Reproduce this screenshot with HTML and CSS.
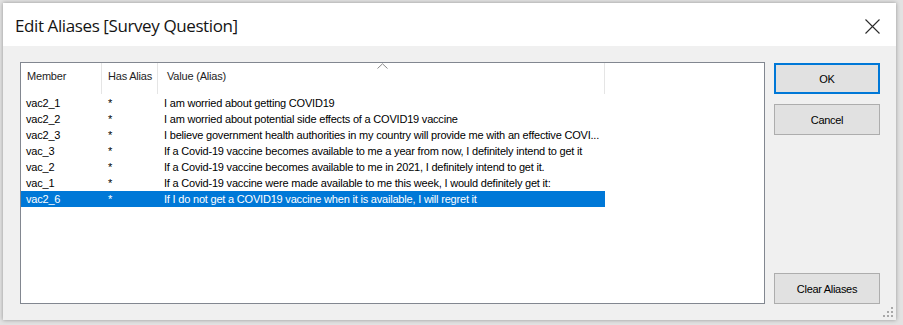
FILE: index.html
```html
<!DOCTYPE html>
<html lang="en">
  <head>
    <meta charset="UTF-8" />
    <title>Edit Aliases</title>
    <link rel="stylesheet" href="styles.css">
  </head>
  <body>
    <div class="dialog">
      <div class="title-bar">
        <p class="title">Edit Aliases [Survey Question]</p>
        <svg class="close-icon" width="15" height="15" viewBox="0 0 15 15">
          <path d="M0.5 0.5 L14.5 14.5 M14.5 0.5 L0.5 14.5" stroke="#2b2b2b" stroke-width="1.1" fill="none"/>
        </svg>
      </div>
      <div class="dialog-body">
        <div class="alias-list">
          <div class="list-header">
            <div class="head-cell col-member">Member</div>
            <div class="head-cell col-has">Has Alias</div>
            <div class="head-cell col-value">Value (Alias)</div>
            <div class="head-cell col-rest"></div>
            <svg class="sort-arrow" width="11" height="6" viewBox="0 0 11 6">
              <path d="M0.5 5.5 L5.5 0.8 L10.5 5.5" stroke="#8a8a8a" stroke-width="1" fill="none"/>
            </svg>
          </div>
          <div class="list-rows">
            <div class="row"><span class="col-member">vac2_1</span><span class="col-has">*</span><span class="col-value">I am worried about getting COVID19</span></div>
            <div class="row"><span class="col-member">vac2_2</span><span class="col-has">*</span><span class="col-value">I am worried about potential side effects of a COVID19 vaccine</span></div>
            <div class="row"><span class="col-member">vac2_3</span><span class="col-has">*</span><span class="col-value">I believe government health authorities in my country will provide me with an effective COVI...</span></div>
            <div class="row"><span class="col-member">vac_3</span><span class="col-has">*</span><span class="col-value">If a Covid-19 vaccine becomes available to me a year from now, I definitely intend to get it</span></div>
            <div class="row"><span class="col-member">vac_2</span><span class="col-has">*</span><span class="col-value">If a Covid-19 vaccine becomes available to me in 2021, I definitely intend to get it.</span></div>
            <div class="row"><span class="col-member">vac_1</span><span class="col-has">*</span><span class="col-value">If a Covid-19 vaccine were made available to me this week, I would definitely get it:</span></div>
            <div class="row selected"><span class="col-member">vac2_6</span><span class="col-has">*</span><span class="col-value">If I do not get a COVID19 vaccine when it is available, I will regret it</span></div>
          </div>
        </div>
        <div class="button-column">
          <button class="dlg-button default-button">OK</button>
          <button class="dlg-button">Cancel</button>
          <button class="dlg-button clear-button">Clear Aliases</button>
        </div>
      </div>
      <div class="grip">
        <svg width="10" height="10" viewBox="0 0 10 10">
          <rect x="8" y="0" width="2" height="2" fill="#a8a8a8"/>
          <rect x="4" y="4" width="2" height="2" fill="#a8a8a8"/>
          <rect x="8" y="4" width="2" height="2" fill="#a8a8a8"/>
          <rect x="0" y="8" width="2" height="2" fill="#a8a8a8"/>
          <rect x="4" y="8" width="2" height="2" fill="#a8a8a8"/>
          <rect x="8" y="8" width="2" height="2" fill="#a8a8a8"/>
        </svg>
      </div>
    </div>
  </body>
</html>
```

FILE: styles.css
```css
body{
  margin: 0;
  padding: 3px 7px 5px 3px;
  background-color: rgb(226, 226, 226);
  font-family: "Liberation Sans", Arial, sans-serif;
  font-size: 11px;
  letter-spacing: -0.2px;
  color: rgb(0, 0, 0);
}
.dialog{
  position: relative;
  width: 893px;
  height: 317px;
  background-color: rgb(240, 240, 240);
  box-shadow: 0 0 4px rgba(0, 0, 0, 0.35);
  display: flex;
  flex-direction: column;
}
.title-bar{
  height: 43px;
  background-color: white;
  display: flex;
  align-items: center;
  justify-content: space-between;
  padding: 0 16px 0 12px;
  flex-shrink: 0;
}
.title{
  margin: 0;
  font-family: "Open Sans", "Noto Sans", sans-serif;
  font-size: 17px;
  letter-spacing: -0.4px;
  color: rgb(20, 20, 20);
  padding-top: 2px;
}
.close-icon{
  margin-top: 4px;
}
.dialog-body{
  flex: 1;
  display: flex;
  padding: 16px 16px 16px 17px;
}
.alias-list{
  width: 743px;
  height: 240px;
  border: 1px solid rgb(130, 135, 144);
  background-color: white;
}
.list-header{
  position: relative;
  display: flex;
  height: 31px;
}
.head-cell{
  border-right: 1px solid rgb(229, 229, 229);
  padding: 0 6px;
  line-height: 23px;
  padding-top: 2px;
  box-sizing: border-box;
  white-space: nowrap;
  color: rgb(30, 30, 30);
}
.head-cell.col-rest{
  border-right: none;
  flex: 1;
}
.col-member{
  width: 81px;
  padding-left: 6px;
}
.col-has{
  width: 56px;
  padding-left: 6px;
}
.col-value{
  width: 447px;
  padding-left: 6px;
}
.head-cell.col-member{
  padding-left: 6px;
}
.head-cell.col-value{
  padding-left: 9px;
}
.sort-arrow{
  position: absolute;
  left: 356px;
  top: 0;
}
.list-rows{
  padding-top: 1px;
}
.row{
  display: flex;
  height: 16px;
  line-height: 16px;
  width: 584px;
  white-space: nowrap;
}
.row span{
  box-sizing: border-box;
  overflow: hidden;
}
.row .col-member{
  padding-left: 5px;
}
.row .col-value{
  padding-left: 6px;
}
.row.selected{
  background-color: rgb(0, 120, 215);
  color: white;
}
.button-column{
  display: flex;
  flex-direction: column;
  margin-left: 9px;
  padding-top: 1px;
}
.dlg-button{
  width: 106px;
  height: 31px;
  margin-bottom: 10px;
  background-color: rgb(225, 225, 225);
  border: 1px solid rgb(173, 173, 173);
  font-family: "Liberation Sans", Arial, sans-serif;
  font-size: 11px;
  letter-spacing: -0.3px;
  color: black;
  padding: 0;
}
.default-button{
  border: 2px solid rgb(0, 120, 215);
}
.clear-button{
  margin-top: auto;
  margin-bottom: 0;
}
.grip{
  position: absolute;
  right: 3px;
  bottom: 3px;
  line-height: 0;
}
```
